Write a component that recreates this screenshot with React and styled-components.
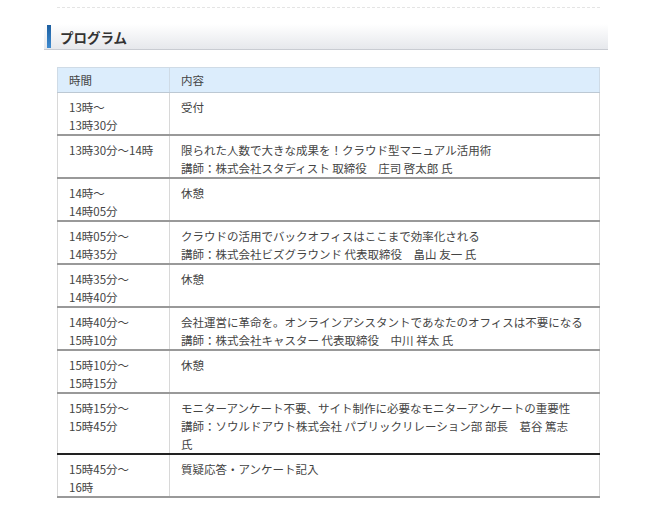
import React from "react";
import styled, { createGlobalStyle } from "styled-components";

const Global = createGlobalStyle`
  body { margin: 0; background: #fff; font-family: "Noto Sans CJK JP", "Liberation Sans", sans-serif; }
`;
const Page = styled.div`
  width: 650px; height: 510px; overflow: hidden; box-sizing: border-box; padding: 7px 0 0 44px;
`;
const Dash = styled.div`
  margin-left: 13px; width: 543px; border-top: 1px dashed #e4e4e4;
`;
const Heading = styled.h2`
  margin: 16px 0 0; width: 564px; height: 26px; box-sizing: border-box;
  background: linear-gradient(#ffffff, #e6e8ec); border-bottom: 1px solid #c9ccd2;
  display: flex; align-items: center; gap: 9px; font-size: 13.5px; font-weight: bold; color: #333;
  &::before { content: ""; width: 4px; height: 23px; margin-left: 3px; background: linear-gradient(#1d5fa0, #3f8bd0); }
`;
const Table = styled.table`
  margin: 17px 0 0 13px; width: 543px; border-collapse: collapse; font-size: 11.5px; color: #444;
  border-right: 1px solid #d8d8d8; border-left: 1px solid #d8d8d8;
`;
const Th = styled.th`
  background: #dcedfc; font-weight: normal; text-align: left; height: 24px; padding: 0 11px;
  border: 1px solid #cfdbe6; border-bottom: 1px solid #bcc8d3;
  &:first-child { width: 89px; }
`;
const Tr = styled.tr`
  border-bottom: 2px solid ${p => (p.$dark ? "#222" : "#999")};
`;
const Td = styled.td`
  vertical-align: top; padding: 5px 11px 0; line-height: 18px; border-left: 1px solid #d8d8d8;
`;
const rows = [
  ["13時～\n13時30分", "受付"],
  ["13時30分～14時", "限られた人数で大きな成果を！クラウド型マニュアル活用術\n講師：株式会社スタディスト 取締役　庄司 啓太郎 氏"],
  ["14時～\n14時05分", "休憩"],
  ["14時05分～\n14時35分", "クラウドの活用でバックオフィスはここまで効率化される\n講師：株式会社ビズグラウンド 代表取締役　畠山 友一 氏"],
  ["14時35分～\n14時40分", "休憩"],
  ["14時40分～\n15時10分", "会社運営に革命を。オンラインアシスタントであなたのオフィスは不要になる\n講師：株式会社キャスター 代表取締役　中川 祥太 氏"],
  ["15時10分～\n15時15分", "休憩"],
  ["15時15分～\n15時45分", "モニターアンケート不要、サイト制作に必要なモニターアンケートの重要性\n講師：ソウルドアウト株式会社 パブリックリレーション部 部長　葛谷 篤志\n氏"],
  ["15時45分～\n16時", "質疑応答・アンケート記入"],
];
const Lines = ({ t }) => t.split("\n").map((l, i) => <div key={i}>{l}</div>);

export default function App() {
  return (
    <Page>
      <Global />
      <Dash />
      <Heading>プログラム</Heading>
      <Table>
        <thead><tr><Th>時間</Th><Th>内容</Th></tr></thead>
        <tbody>
          {rows.map((r, i) => (
            <Tr key={i} $dark={i === 7}>
              <Td><Lines t={r[0]} /></Td>
              <Td><Lines t={r[1]} /></Td>
            </Tr>
          ))}
        </tbody>
      </Table>
    </Page>
  );
}
